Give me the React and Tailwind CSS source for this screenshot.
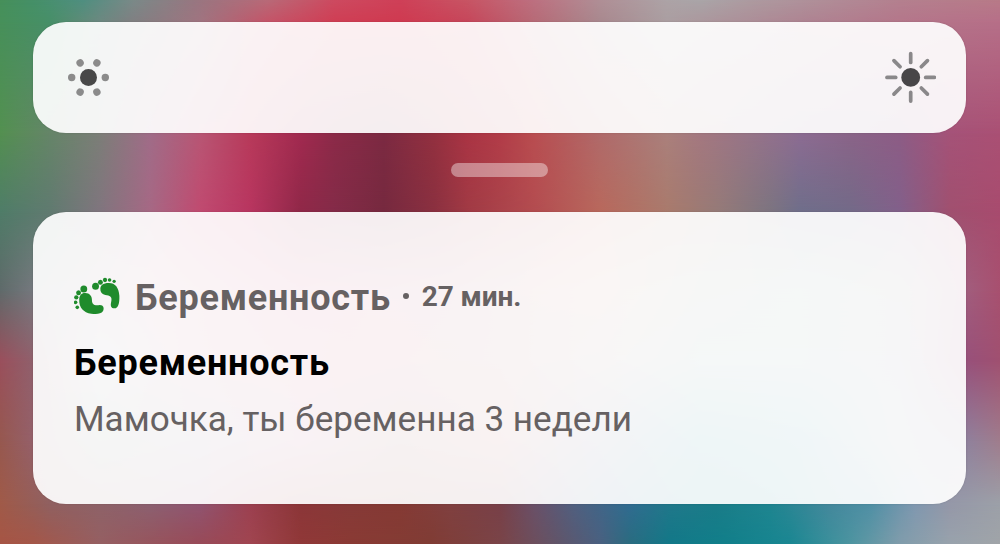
import React from 'react';

// Horizontal colour bands of the wallpaper: y position, then [x, colour] stops
const BANDS = [
  { y: 0, stops: [[0, '#46905a'], [33, '#459068'], [83, '#4f8f80'], [133, '#7a8a88'], [200, '#9a7580'], [267, '#b86a78'], [334, '#cd4a60'], [400, '#cf4058'], [467, '#c85464'], [534, '#bd7080'], [600, '#b08f96'], [667, '#ada3a6'], [700, '#aaa5a8'], [750, '#ad9ba0'], [800, '#af929b'], [900, '#b4808f'], [1000, '#b87a88']] },
  { y: 22, stops: [[0, '#47905a'], [50, '#478f68'], [100, '#6c8880'], [133, '#807f82'], [200, '#a07480'], [267, '#c45468'], [334, '#cf3e54'], [400, '#cf3a50'], [467, '#c6465a'], [534, '#b66a76'], [600, '#a8888e'], [667, '#aa9ea1'], [800, '#ae8492'], [900, '#b4768a'], [1000, '#b66f88']] },
  { y: 133, stops: [[0, '#539050'], [50, '#658568'], [100, '#7c7e78'], [150, '#a06c88'], [200, '#b85674'], [250, '#b83a5a'], [300, '#a22a50'], [334, '#8c2a48'], [384, '#7c2a42'], [434, '#93303f'], [467, '#aa3444'], [500, '#b23c48'], [534, '#b94d50'], [600, '#b06a6a'], [667, '#aa807c'], [700, '#a47880'], [750, '#967488'], [800, '#8c6c92'], [850, '#8a6488'], [900, '#8d5c85'], [950, '#a55278'], [1000, '#aa5074']] },
  { y: 212, stops: [[0, '#4f7c68'], [50, '#607a70'], [100, '#80757e'], [150, '#a66884'], [200, '#c04a70'], [250, '#b83560'], [300, '#902848'], [334, '#842b48'], [384, '#76293f'], [434, '#8a3040'], [467, '#a03a44'], [534, '#b34c50'], [600, '#b8685c'], [667, '#a97a6c'], [720, '#947a78'], [770, '#7c7480'], [800, '#6f6e8a'], [850, '#736a88'], [900, '#82608a'], [950, '#a0506f'], [1000, '#a84b6e']] },
  { y: 290, stops: [[0, '#5f6a6a'], [50, '#808088'], [150, '#c08090'], [300, '#c04a70'], [450, '#b06070'], [600, '#c09080'], [700, '#909a90'], [800, '#80a098'], [900, '#909090'], [960, '#a06080'], [1000, '#a8506f']] },
  { y: 360, stops: [[0, '#9a4f5c'], [33, '#90606c'], [100, '#a0a0a8'], [200, '#c07088'], [350, '#c05868'], [500, '#b07070'], [600, '#a89090'], [700, '#80a0a0'], [800, '#80a0a0'], [900, '#9090a0'], [967, '#98507a'], [1000, '#a05070']] },
  { y: 440, stops: [[0, '#96584f'], [33, '#95606a'], [100, '#808880'], [200, '#907890'], [300, '#b06080'], [400, '#905858'], [500, '#b06060'], [600, '#707090'], [700, '#2a8a98'], [800, '#4090a0'], [900, '#9098a8'], [967, '#90809c'], [1000, '#a07c8c']] },
  { y: 504, stops: [[0, '#a05a48'], [50, '#906060'], [100, '#8e6268'], [150, '#8c6070'], [200, '#905470'], [250, '#9c4050'], [300, '#8c3638'], [350, '#863a38'], [400, '#853a34'], [450, '#804040'], [500, '#784048'], [534, '#6a5068'], [575, '#506080'], [630, '#306c90'], [670, '#20788a'], [715, '#1a7c88'], [770, '#1e8590'], [830, '#44889c'], [870, '#4f90a5'], [915, '#8098b0'], [950, '#9598a8'], [1000, '#9ca0a8']] },
  { y: 544, stops: [[0, '#a65545'], [33, '#a45648'], [100, '#955f62'], [200, '#984a58'], [250, '#a04550'], [300, '#903838'], [350, '#8a3a34'], [430, '#803c34'], [500, '#7a4448'], [540, '#6a5060'], [600, '#4a6080'], [630, '#2a6c80'], [670, '#127888'], [725, '#117f8a'], [790, '#1a8792'], [850, '#4c94a0'], [900, '#809cab'], [950, '#98a2ac'], [1000, '#a0a4a8']] },
];

// Each band fades in over the one above it
const bandStyle = (band, index) => {
  const stops = band.stops.map(([x, color]) => `${color} ${x}px`).join(', ');
  const style = { backgroundImage: `linear-gradient(to right, ${stops})` };
  if (index > 0) {
    style.maskImage = `linear-gradient(to bottom, transparent ${BANDS[index - 1].y}px, black ${band.y}px)`;
  }
  return style;
};

const Wallpaper = () => (
  <div className="absolute inset-0">
    {BANDS.map((band, index) => (
      <div key={band.y} className="absolute inset-0" style={bandStyle(band, index)} />
    ))}
  </div>
);

const DimIcon = () => (
  <svg className="h-11 w-11" viewBox="-22.5 -22.5 44 44">
    <circle r="8.5" fill="#484848" />
    {[0, 60, 120, 180, 240, 300].map((angle) => (
      <circle key={angle} cx="16.8" r="3.7" fill="#8b8b8b" transform={`rotate(${angle})`} />
    ))}
  </svg>
);

const BrightIcon = () => (
  <svg className="h-[52px] w-[52px]" viewBox="-26.7 -26.4 52 52">
    <circle r="9.4" fill="#484648" />
    {[0, 45, 90, 135, 180, 225, 270, 315].map((angle) => (
      <path
        key={angle}
        d="M15 0H23.7"
        stroke="#8a888a"
        strokeWidth="3.7"
        strokeLinecap="round"
        transform={`rotate(${angle})`}
      />
    ))}
  </svg>
);

const FeetIcon = () => (
  <svg className="h-[38px] w-[47px]" viewBox="71 50 144 114" preserveAspectRatio="none" fill="#1f8b2c">
    <circle cx="101" cy="86" r="10.5" />
    <circle cx="85" cy="97" r="7.5" />
    <circle cx="78" cy="111" r="6.5" />
    <circle cx="76" cy="126" r="5.5" />
    <circle cx="81" cy="141" r="5.5" />
    <path d="M104 98C118 97 127 108 126 120C126 134 136 137 150 134C162 134 164 144 160 152C154 162 138 162 124 160C100 157 86 140 87 118C87 106 94 98 104 98Z" />
    <circle cx="137" cy="78" r="10.5" />
    <circle cx="152" cy="66" r="7.5" />
    <circle cx="166" cy="59" r="6.5" />
    <circle cx="180" cy="59" r="5.5" />
    <circle cx="194" cy="63" r="5" />
    <path d="M152 88C150 76 160 68 178 68C198 68 208 82 210 106C211 130 206 144 195 144C184 144 182 136 185 124C188 112 184 107 172 105C158 102 152 96 152 88Z" />
  </svg>
);

const BrightnessSlider = () => (
  <div className="flex h-[111px] items-center justify-between rounded-[33px] bg-white/92 pb-px pl-[33px] pr-[30px] shadow-[0_0_2px_rgba(0,0,0,0.15)]">
    <DimIcon />
    <BrightIcon />
  </div>
);

const NotificationCard = ({ app, time, title, text }) => (
  <div className="h-[292px] rounded-[33px] bg-white/92 pl-[41px] pt-[62px] shadow-[0_0_2px_rgba(0,0,0,0.15)]">
    <div className="flex h-11 items-center text-[#666162]">
      <FeetIcon />
      <span className="ml-[14px] pt-1 text-[36px] font-bold leading-[44px] tracking-[0.75px]">{app}</span>
      <span className="ml-[12px] h-[6px] w-[6px] rounded-full bg-[#666162]" />
      <span className="ml-[13px] pt-0.5 text-[28px] font-bold leading-[44px] tracking-[-0.1px]">{time}</span>
    </div>
    <div className="mt-[23px] text-[36px] font-bold leading-[44px] tracking-[0.75px] text-black">{title}</div>
    <div className="mt-3 text-[35.1px] leading-[44px] text-[#666162]">{text}</div>
  </div>
);

const App = () => {
  return (
    <div className="relative h-[544px] w-[1000px] overflow-hidden font-[Roboto,sans-serif]">
      <Wallpaper />
      <div className="relative flex flex-col pl-[33px] pr-[34px] pt-[22px]">
        <BrightnessSlider />
        <div className="mt-[30px] mb-[35px] h-[14px] w-[97px] self-center rounded-full bg-white/40" />
        <NotificationCard
          app="Беременность"
          time="27 мин."
          title="Беременность"
          text="Мамочка, ты беременна 3 недели"
        />
      </div>
    </div>
  );
};

export default App;
